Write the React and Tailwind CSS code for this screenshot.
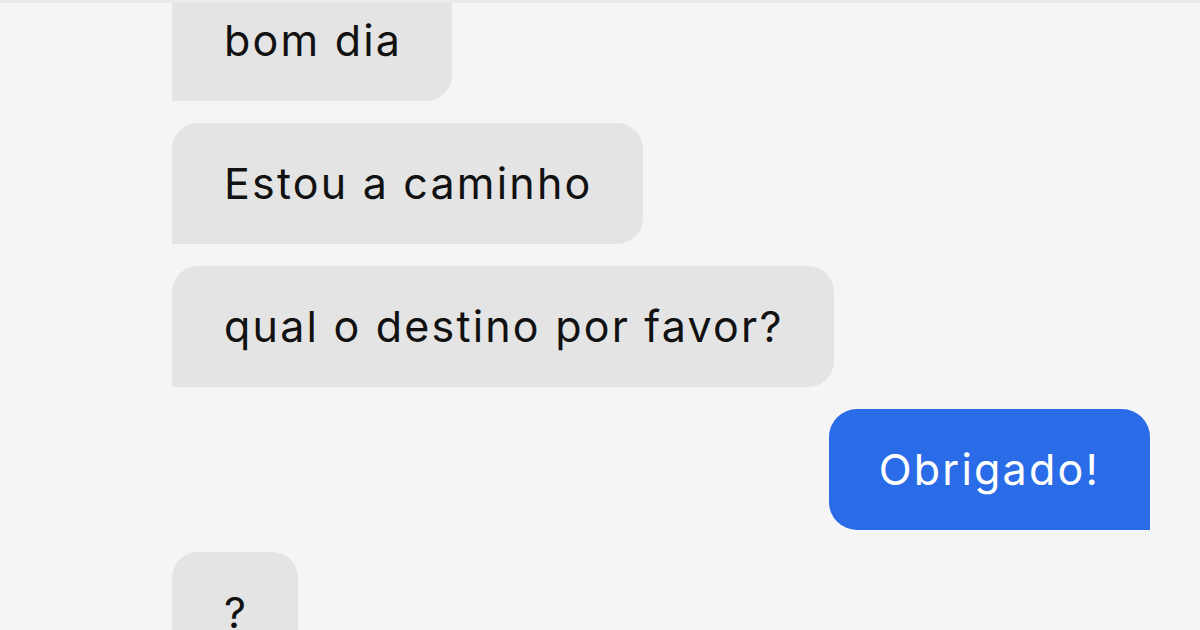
import React from 'react';

const messages = [
    { text: 'bom dia', mine: false },
    { text: 'Estou a caminho', mine: false },
    { text: 'qual o destino por favor?', mine: false },
    { text: 'Obrigado!', mine: true },
    { text: '?', mine: false },
];

const Bubble = ({ text, mine }) => {
    if (mine) {
        return (
            <div className="self-end h-[121px] flex items-center pl-[50px] pr-[50px] bg-[#2a6ce8] text-white rounded-tl-[28px] rounded-tr-[28px] rounded-bl-[28px] rounded-br-none">
                {text}
            </div>
        );
    }
    return (
        <div className="self-start h-[121px] flex items-center pl-[52px] pr-[50px] bg-[#e4e4e4] text-[#111111] rounded-tl-[26px] rounded-tr-[26px] rounded-br-[26px] rounded-bl-none">
            {text}
        </div>
    );
};

export default function App() {
    return (
        <div className="w-[1200px] h-[630px] overflow-hidden bg-[#f5f5f5] border-t-[3px] border-[#eaeaea]" style={{ fontFamily: 'Inter, "Liberation Sans", sans-serif' }}>
            <div className="flex flex-col gap-[22px] pl-[172px] pr-[50px] -mt-[23px] text-[43px] leading-none tracking-[2.2px]">
                {messages.map((m, i) => (
                    <Bubble key={i} text={m.text} mine={m.mine} />
                ))}
            </div>
        </div>
    );
}
